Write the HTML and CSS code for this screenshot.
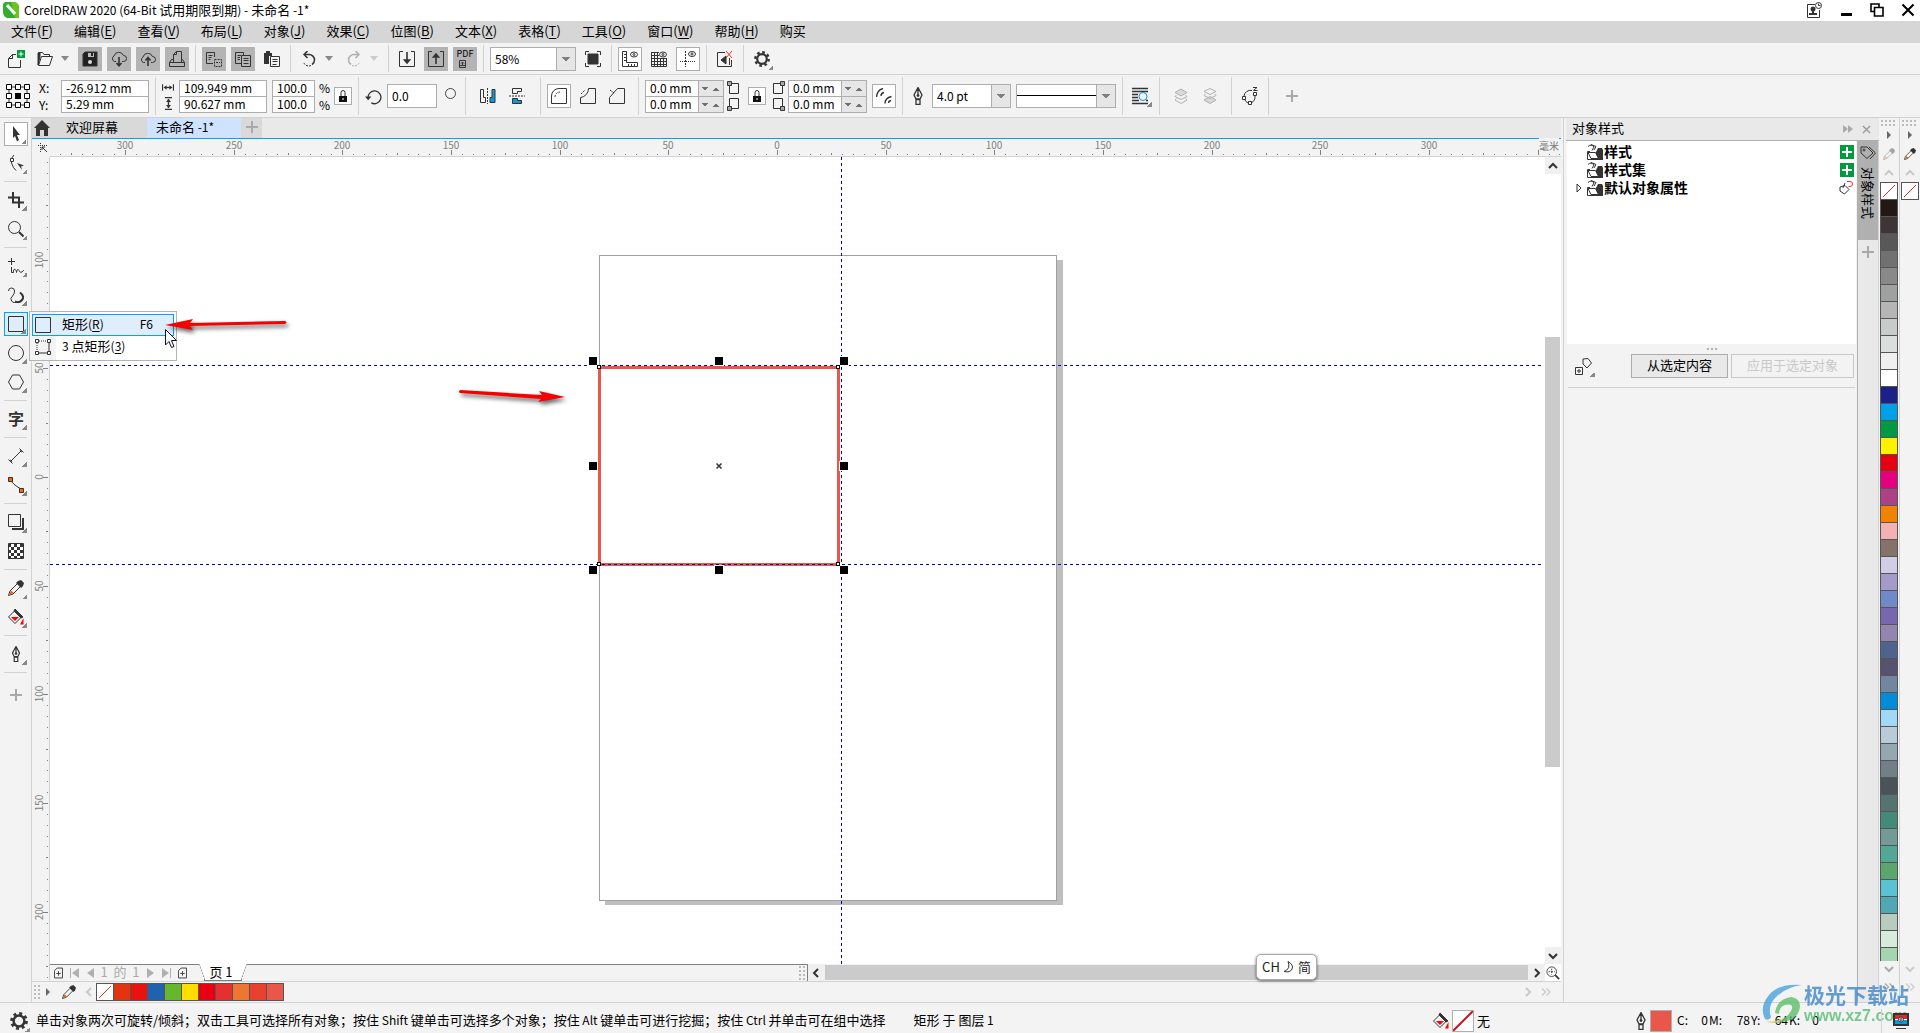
FILE: index.html
```html
<!DOCTYPE html>
<html lang="zh-CN">
<head>
<meta charset="utf-8">
<title>CorelDRAW 2020 (64-Bit 试用期限到期) - 未命名 -1*</title>
<link rel="stylesheet" href="styles.css">
</head>
<body>
<svg class="defs" aria-hidden="true">
  <symbol id="new" viewBox="0 0 18 18"><path d="M9 4.500H5.500L1.500 8.500V17.500H13.500V10M5.500 4.500V8.500H1.500" /><path d="M10 0H18V8H10z" fill="#009b3e" stroke="none"/><path d="M14 1.500V6.500M11.500 4H16.500" stroke="#fff"/></symbol>
  <symbol id="open" viewBox="0 0 16 16"><path d="M1.500 14V1.500H5.500L7 3.500H12.500V5M1.500 14.500 4.500 5.500H15.500L12.500 14.500z"/><path d="M1 2 3 2 3 6 1 14z" fill="#333"/></symbol>
  <symbol id="save" viewBox="0 0 16 16"><path d="M3 1H15V15H1V3z" fill="#222"/><path d="M6 2H12V6H6z" fill="#bbb" stroke="none"/><path d="M9 2H11V5H9z" fill="#222" stroke="none"/><circle cx="8" cy="11" r="2" fill="#ddd" stroke="none"/></symbol>
  <symbol id="clouddn" viewBox="0 0 16 16"><path d="M5 10.500H3.500A3 3 0 0 1 3 5 5 5 0 0 1 12.500 4.500 3 3 0 0 1 12.500 10.500H11"/><path d="M8 6V14M5.500 12 8 14.800 10.500 12" stroke-width="1.600"/></symbol>
  <symbol id="cloudup" viewBox="0 0 16 16"><path d="M5 11.500H3.500A3 3 0 0 1 3 6 5 5 0 0 1 12.500 5.500 3 3 0 0 1 12.500 11.500H11"/><path d="M8 15V7M5.500 9.500 8 6.500 10.500 9.500" stroke-width="1.600"/></symbol>
  <symbol id="print" viewBox="0 0 16 16"><path d="M4.500 11V3.500L7.500 .500H12.500V11M7.500 .500V3.500H4.500M4.500 8.500H2.500L.500 11.500V15.500H15.500V11.500L13.500 8.500H12.500M.500 11.500H15.500"/></symbol>
  <symbol id="cut" viewBox="0 0 16 16"><path d="M7 12.500H.500V1.500H8.500V6M2.500 4.500H6.500M2.500 6.500H5.500M2.500 8.500H4.500"/><path d="M8.500 8.500H15.500V15.500H8.500zM10 11.500H14" stroke-dasharray="2 1"/></symbol>
  <symbol id="copy" viewBox="0 0 16 16"><path d="M6 12.500H.500V1.500H8.500V4M2.500 4.500H6M2.500 6.500H5M2.500 8.500H5M6.500 4.500H15.500V15.500H6.500zM8.500 7.500H13.500M8.500 9.500H13.500M8.500 12.500H13.500"/></symbol>
  <symbol id="paste" viewBox="0 0 16 16"><path d="M0 2H2V0H6V2H8V5H5V13H0z" fill="#333" stroke="none"/><path d="M6.500 5.500H15.500V15.500H6.500zM8.500 8.500H13.500M8.500 10.500H13.500M8.500 13.500H12.500"/></symbol>
  <symbol id="undo" viewBox="0 0 16 16"><path d="M4 3.500H8A5.500 5.500 0 0 1 13.500 9 5.500 5.500 0 0 1 11 13.500" stroke-width="1.500"/><path d="M10 14.500A5.500 5.500 0 0 1 2.500 11" stroke-dasharray="2 1"/><path d="M6.500 0 3 3.500 6.500 7" stroke-width="1.500"/></symbol>
  <symbol id="import" viewBox="0 0 16 16"><path d="M4 .500H.500V15.500H15.500V.500H12"/><path d="M8 1V12M5.500 9 8 12 10.500 9z" stroke-width="1.600" fill="#333"/></symbol>
  <symbol id="export" viewBox="0 0 16 16"><path d="M4 .500H.500V15.500H15.500V.500H12"/><path d="M8 13V3M5.500 6 8 3 10.500 6z" stroke-width="1.600" fill="#333"/></symbol>
  <symbol id="pdf" viewBox="0 0 18 18"><path d="M3.500 10.500H9.500V17.500H3.500zM3.500 15.500H9.500M6.500 15V12M5 13.500 6.500 12 8 13.500"/></symbol>
  <symbol id="full" viewBox="0 0 16 16"><path d="M3 3H13V13H3z" fill="#333"/><path d="M.500 4V.500H4M12 .500H15.500V4M15.500 12V15.500H12M4 15.500H.500V12"/></symbol>
  <symbol id="rulers" viewBox="0 0 16 16"><path d="M.500 .500H4.500V11.500H15.500V15.500H.500zM2 3.500H4M2 6.500H4M2 9.500H4M6.500 13V15M9.500 13V15M12.500 13V15"/><ellipse cx="12" cy="3.500" rx="3.500" ry="2.500"/><circle cx="12" cy="3.500" r="1"/></symbol>
  <symbol id="grid" viewBox="0 0 16 16"><path d="M.500 1V15.500H15.500V7M3.500 1V15M6.500 1V15M9.500 7V15M12.500 7V15M.500 1.500H8M.500 4.500H8M.500 7.500H15M.500 10.500H15M.500 13.500H15"/><ellipse cx="12" cy="3.500" rx="3.500" ry="2.500"/><circle cx="12" cy="3.500" r="1"/></symbol>
  <symbol id="guides" viewBox="0 0 16 16"><path d="M5.500 0V16" stroke-dasharray="2 1"/><path d="M0 10.500H16" stroke-dasharray="1 1"/><ellipse cx="12" cy="3" rx="3.500" ry="2.500"/><circle cx="12" cy="3" r="1"/></symbol>
  <symbol id="snap" viewBox="0 0 16 16"><path d="M8 1.500H.500V15.500H14.500V9"/><path d="M4 9 9 5V13z" fill="#333"/><path d="M12.500 7V14"/><path d="M9 0 15 7M15 0 9 7" stroke="#e33"/></symbol>
  <symbol id="gear" viewBox="0 0 16 16"><circle cx="8" cy="8" r="4.800" stroke-width="2.200"/><circle cx="8" cy="8" r="6.700" stroke-width="2.400" stroke-dasharray="2.630 2.630"/></symbol>
  <symbol id="origin" viewBox="0 0 24 24"><path d="M3 3H21V21H3z"/><path d="M.500 .500H5.500V5.500H.500zM9.500 .500H14.500V5.500H9.500zM18.500 .500H23.500V5.500H18.500zM.500 9.500H5.500V14.500H.500zM18.500 9.500H23.500V14.500H18.500zM.500 18.500H5.500V23.500H.500zM9.500 18.500H14.500V23.500H9.500zM18.500 18.500H23.500V23.500H18.500z" fill="#fff" stroke="#000"/><path d="M9 9H15V15H9z" fill="#000" stroke="none"/></symbol>
  <symbol id="wd" viewBox="0 0 13 9"><path d="M.500 1V8M12.500 1V8" stroke-width="1.400"/><path d="M2 4.500H11" stroke-width="1.400"/><path d="M5 2 2 4.500 5 7zM8 2 11 4.500 8 7z" fill="#333" stroke="none"/></symbol>
  <symbol id="ht" viewBox="0 0 9 13"><path d="M1 .500H8M1 12.500H8" stroke-width="1.400"/><path d="M4.500 2V11" stroke-width="1.400"/><path d="M2 5 4.500 2 7 5zM2 8 4.500 11 7 8z" fill="#333" stroke="none"/></symbol>
  <symbol id="lock" viewBox="0 0 12 14"><path d="M4 7V3.500A2 2 0 0 1 8 3.500V7"/><path d="M2 7H10V13H2z" fill="#111" stroke="none"/><path d="M6 9V11" stroke="#fff"/></symbol>
  <symbol id="rotate" viewBox="0 0 16 16"><path d="M3 9.500A6 6 0 1 1 6 14" stroke-width="1.200"/><path d="M0 8H6L3 11.500z" fill="#333" stroke="none"/></symbol>
  <symbol id="mirh" viewBox="0 0 16 16"><path d="M.500 1.500H3.500V9.500H5.500V14.500H.500z"/><path d="M7.500 0V16" stroke-dasharray="2 1"/><path d="M10 9.500H12V1.500H15V14.500H10z" fill="#1296db"/></symbol>
  <symbol id="mirv" viewBox="0 0 16 16"><path d="M3.500 5.500V.500H12.500V3.500H8.500V5.500z"/><path d="M0 8H16" stroke-dasharray="2 1"/><path d="M3.500 10.500H8.500V12.500H12.500V15.500H3.500z" fill="#1296db"/></symbol>
  <symbol id="cround" viewBox="0 0 16 16"><path d="M.500 8A7.500 7.500 0 0 1 8 .500H15.500V15.500H.500z"/><path d="M4 9A5 5 0 0 1 9 4" stroke-dasharray="2 1"/></symbol>
  <symbol id="cscal" viewBox="0 0 16 16"><path d="M8.500 .500H15.500V15.500H.500V9.500A9 9 0 0 0 8.500 .500z"/><path d="M1 6 5 2" stroke-dasharray="2 1"/></symbol>
  <symbol id="ccham" viewBox="0 0 16 16"><path d="M8.500 .500H15.500V15.500H.500V9.500z"/><path d="M1 2 5 5" stroke-dasharray="2 1"/></symbol>
  <symbol id="ctl" viewBox="0 0 13 14"><path d="M2.500 2.500H11.500V12.500H2.500z"/><path d="M.500 .500H4.500V4.500H.500z" fill="#aaa"/></symbol>
  <symbol id="cbl" viewBox="0 0 13 14"><path d="M2.500 1.500H11.500V11.500H2.500z"/><path d="M.500 9.500H4.500V13.500H.500z" fill="#aaa"/></symbol>
  <symbol id="ctr" viewBox="0 0 13 14"><path d="M1.500 2.500H10.500V12.500H1.500z"/><path d="M8.500 .500H12.500V4.500H8.500z" fill="#aaa"/></symbol>
  <symbol id="cbr" viewBox="0 0 13 14"><path d="M1.500 1.500H10.500V11.500H1.500z"/><path d="M8.500 9.500H12.500V13.500H8.500z" fill="#aaa"/></symbol>
  <symbol id="rel" viewBox="0 0 16 16"><path d="M.500 9Q1 2 7 .500M5 8Q5 5 8 4.500M9 15.500Q9 10 15.500 8.500M12.500 15Q12.500 13 15 12.500" stroke-width="1.300"/></symbol>
  <symbol id="pen" viewBox="0 0 12 18"><path d="M6 .500 2 8 4 12H8L10 8zM6 2V8M4 12.500H8V17.500H4z" stroke-width="1.300"/><circle cx="6" cy="8.500" r="1" fill="#333"/></symbol>
  <symbol id="wrap" viewBox="0 0 18 18"><path d="M0 1.500H16M0 4.500H16M0 7.500H6M0 10.500H6M0 13.500H7M0 16.500H16M14 13.500H16" stroke-width="1.300"/><circle cx="11" cy="9.500" r="4" stroke="#1296db"/></symbol>
  <symbol id="front" viewBox="0 0 16 16"><path d="M8 1 14 4.500 8 8 2 4.500z" fill="#aaa"/><path d="M3.500 7 2 8.500 8 11.500 14 8.500 12.500 7M3.500 10.500 2 12 8 15.500 14 12 12.500 10.500"/></symbol>
  <symbol id="back" viewBox="0 0 16 16"><path d="M8 8.500 14 12 8 15.500 2 12z" fill="#aaa"/><path d="M8 .500 14 3.500 8 6.500 2 3.500zM3.500 6 2 7.500 8 10.500 14 7.500 12.500 6"/></symbol>
  <symbol id="curve" viewBox="0 0 18 18"><path d="M11 3.500A6.500 6.500 0 0 0 3 9M4 13A6.500 6.500 0 0 0 7 16M10 16A7 7 0 0 0 14 9"/><path d="M1.500 9.500H4.500V12.500H1.500zM12.500 5.500H15.500V8.500H12.500zM7.500 14.500H10.500V17.500H7.500z" fill="#fff"/><path d="M12 .500H16L12.500 3.500H16.500"/></symbol>
  <symbol id="plus" viewBox="0 0 12 12"><path d="M6 0V12M0 6H12" stroke="#aaa" stroke-width="2"/></symbol>
  <symbol id="home" viewBox="0 0 16 16"><path d="M8 0 16 8H14V16H10V10H6V16H2V8H0z" fill="#333" stroke="none"/></symbol>
  <symbol id="pick" viewBox="0 0 16 16"><path d="M5 0 12 9H9L11 14 9 15.500 7 10 5 12z" fill="#333" stroke="none"/></symbol>
  <symbol id="shape" viewBox="0 0 16 16"><path d="M6 0Q2 3 3.500 8T8 15.500"/><path d="M2.500 3.500H5.500V6.500H2.500z" fill="#fff"/><path d="M9 8 16 10.500 13 11.500 14 15z" fill="#333" stroke="none"/></symbol>
  <symbol id="crop" viewBox="0 0 16 16"><path d="M5 0V10.500H16M0 5.500H11V16M5 5.500H11" stroke-width="2"/></symbol>
  <symbol id="zoom" viewBox="0 0 16 16"><circle cx="6.500" cy="6.500" r="6"/><path d="M11 11 15.500 15.500" stroke-width="2"/></symbol>
  <symbol id="free" viewBox="0 0 16 16"><path d="M3.500 0V7M0 3.500H7M3.500 9V14.500H5.500Q5 10.500 7 11.500T8.500 14.500Q9.500 9.500 11 12.500T14 14 16 12"/></symbol>
  <symbol id="art" viewBox="0 0 16 16"><path d="M.500 4A3 3 0 0 1 6.500 4Q7 6 4.500 9A3.500 3.500 0 0 0 9 15"/><path d="M7 14.500Q11 16.500 14 13T12 5.500" stroke-width="2"/></symbol>
  <symbol id="rect" viewBox="0 0 16 16"><path d="M.500 .500H15.500V15.500H.500z"/></symbol>
  <symbol id="rect3" viewBox="0 0 16 16"><path d="M2 2H14" stroke-dasharray="1 1"/><path d="M2 2V14" stroke-dasharray="1 1"/><path d="M14 2V14H2"/><path d="M.500 .500H3.500V3.500H.500zM12.500 .500H15.500V3.500H12.500zM.500 12.500H3.500V15.500H.500zM12.500 12.500H15.500V15.500H12.500z" fill="#fff"/></symbol>
  <symbol id="ellipse" viewBox="0 0 16 16"><circle cx="8" cy="8" r="7.500"/></symbol>
  <symbol id="poly" viewBox="0 0 16 16"><path d="M4.500 1H11.500L15.500 8 11.500 15H4.500L.500 8z"/></symbol>
  <symbol id="dim" viewBox="0 0 16 16"><path d="M2 14 14 2M.500 11.500 4.500 15.500M11.500 .500 15.500 4.500"/><path d="M2 14 2.500 11.500 4.500 13.500zM14 2 11.500 2.500 13.500 4.500z" fill="#333" stroke="none"/></symbol>
  <symbol id="conn" viewBox="0 0 16 16"><path d="M3 3Q4 7 13 12"/><path d="M.500 .500H4.500V4.500H.500zM11.500 11.500H15.500V15.500H11.500z" fill="#f60"/></symbol>
  <symbol id="shadow" viewBox="0 0 16 16"><path d="M.500 .500H12.500V12.500H.500z"/><path d="M15 4V15H4" stroke-width="2"/></symbol>
  <symbol id="check" viewBox="0 0 16 16"><path d="M.500 .500H15.500V15.500H.500z" fill="#fff"/><path d="M0 2.500H16M0 8.500H16M0 14.500H16" stroke-width="3" stroke-dasharray="3 3"/><path d="M3 5.500H16M3 11.500H16" stroke-width="3" stroke-dasharray="3 3"/></symbol>
  <symbol id="dropper" viewBox="0 0 16 16"><path d="M10 1 13 0 16 3 15 6 13 8 8 3z" fill="#333" stroke="none"/><path d="M9 4 2 11 .500 15.500 5 14 12 7"/><path d="M3 10.500 6 13 1 15.500z" fill="#e06a1b" stroke="none"/></symbol>
  <symbol id="bucket" viewBox="0 0 16 16"><path d="M7 1.500 13.500 8 7 14.500 .500 8z"/><path d="M7 0 15 8 13 9 6 2z" fill="#333"/><path d="M3 8H11L7 12z" fill="red" stroke="none"/><path d="M15.500 9V15.500H12Z" fill="red" stroke="none"/></symbol>
  <symbol id="account" viewBox="0 0 16 16"><path d="M9 2.500H1.500V15.500H13.500V8"/><circle cx="7" cy="7" r="2.500" fill="#333" stroke="none"/><path d="M3 13V11H6V9H8V11H11V13z" fill="#333" stroke="none"/><circle cx="12.500" cy="3.500" r="3"/><path d="M12.500 1.500V3.500H14.500"/></symbol>
  <symbol id="min" viewBox="0 0 14 14"><path d="M2 11.500H13" stroke="#000" stroke-width="3"/></symbol>
  <symbol id="restore" viewBox="0 0 14 14"><path d="M4 8.500H1V1H9V4M4.500 4.500H13V13H4.500z" stroke="#000" stroke-width="1.600"/></symbol>
  <symbol id="close" viewBox="0 0 14 14"><path d="M1.500 1.500 12.500 12.500M12.500 1.500 1.500 12.500" stroke="#000" stroke-width="2"/></symbol>
  <symbol id="folder" viewBox="0 0 16 16"><path d="M3 7.500H.500V15.500H15"/><path d="M9 8 11 4H15L16 6V16H9z" fill="#333" stroke="none"/><path d="M1 8.500H8.500L11.500 14.500H4z" fill="#fff"/><path d="M1 2.500Q4-.500 7 3L5 6.500M4 .500 9 2.500 7 6"/></symbol>
  <symbol id="tag" viewBox="0 0 16 16"><path d="M1 2 7 2 13 8 7 13.500 1 8z"/><path d="M9 2 15.500 8 10 14"/><circle cx="4" cy="5" r="1"/></symbol>
  <symbol id="tagred" viewBox="0 0 16 16"><path d="M2 7 7 5.500 11 9.500 6.500 14 2 11zM5 8 7 3"/><path d="M9 1.500H12A2.500 2.500 0 0 1 12 6.500H10.500" stroke="#e33"/></symbol>
  <symbol id="tagadd" viewBox="0 0 18 18"><path d="M8 2 13 1.500 16.500 6 12 11 8 7zM.500 10.500H7.500V17.500H.500zM4 12V16M2 14H6"/></symbol>
  <symbol id="addpg" viewBox="0 0 10 12"><path d="M3.500 .500H9.500V11.500H.500V3.500zM5 4V9M2.500 6.500H7.500"/></symbol>
  <symbol id="zoompg" viewBox="0 0 16 16"><circle cx="6.500" cy="6.500" r="5.500"/><path d="M10.500 10.500 15 15" stroke-width="2"/><path d="M6.500 3V10M3 6.500H10" stroke-dasharray="2 1"/></symbol>
  <symbol id="chev" viewBox="0 0 10 10"><path d="M3 1 7 5 3 9" stroke-width="2"/></symbol>
  <symbol id="chev2" viewBox="0 0 10 10"><path d="M1 1.500 4.500 5 1 8.500M5.500 1.500 9 5 5.500 8.500" stroke-width="1.300"/></symbol>
  <symbol id="monitor" viewBox="0 0 16 16"><path d="M1 1H15V12H1z" fill="#fff" stroke-width="2"/><path d="M2 2H14V6H2z" fill="#e8262a" stroke="none"/><path d="M2 7H14V11H2z" fill="#00a0e9" stroke="none"/><circle cx="8" cy="6.500" r="2.500" fill="#fff"/><circle cx="8" cy="6.500" r="1"/><path d="M3 15.500H13"/></symbol>
  <symbol id="ruleorg" viewBox="0 0 10 10"><path d="M0 2.500H10M2.500 0V10" stroke-dasharray="1 1"/><path d="M4 4 9 9M4 7V4H7"/></symbol>
</svg>

<header class="titlebar">
  <svg class="logo" viewBox="0 0 16 18"><path d="M2 1H12Q16 3 16 6V17H4Q0 15 0 11V3z" fill="#2fae32"/><path d="M8 1H12Q16 3 16 6V17H12z" fill="#6cc51f"/><path d="M4 4 12 13" stroke="#fff" stroke-width="3"/></svg>
  <h1><span class="lat">CorelDRAW 2020 (64-Bit</span> 试用期限到期<span class="lat">) -</span> 未命名<span class="lat"> -1*</span></h1>
  <div class="winbtns">
    <button aria-label="账户"><svg class="ic"><use href="#account"/></svg></button>
    <button aria-label="最小化"><svg class="ic i14"><use href="#min"/></svg></button>
    <button aria-label="还原"><svg class="ic i14"><use href="#restore"/></svg></button>
    <button aria-label="关闭"><svg class="ic i14"><use href="#close"/></svg></button>
  </div>
</header>

<nav class="menubar">
  <button>文件(<u>F</u>)</button><button>编辑(<u>E</u>)</button><button>查看(<u>V</u>)</button><button>布局(<u>L</u>)</button><button>对象(<u>J</u>)</button><button>效果(<u>C</u>)</button><button>位图(<u>B</u>)</button><button>文本(<u>X</u>)</button><button>表格(<u>T</u>)</button><button>工具(<u>O</u>)</button><button>窗口(<u>W</u>)</button><button>帮助(<u>H</u>)</button><button>购买</button>
</nav>

<div class="bar standard">
  <button class="tool" aria-label="新建"><svg class="ic i18"><use href="#new"/></svg></button>
  <div class="split"><button class="tool" aria-label="打开"><svg class="ic"><use href="#open"/></svg></button><button class="drop" aria-label="最近文件"></button></div>
  <button class="tool dark" aria-label="保存"><svg class="ic"><use href="#save"/></svg></button>
  <button class="tool dark" aria-label="从云端打开"><svg class="ic"><use href="#clouddn"/></svg></button>
  <button class="tool dark" aria-label="保存到云端"><svg class="ic"><use href="#cloudup"/></svg></button>
  <button class="tool dark" aria-label="打印"><svg class="ic"><use href="#print"/></svg></button>
  <i class="sep"></i>
  <button class="tool dark" aria-label="剪切"><svg class="ic"><use href="#cut"/></svg></button>
  <button class="tool dark" aria-label="复制"><svg class="ic"><use href="#copy"/></svg></button>
  <button class="tool" aria-label="粘贴"><svg class="ic"><use href="#paste"/></svg></button>
  <i class="sep"></i>
  <div class="split"><button class="tool" aria-label="撤消"><svg class="ic"><use href="#undo"/></svg></button><button class="drop" aria-label="撤消列表"></button></div>
  <div class="split off"><button class="tool" aria-label="重做" disabled><svg class="ic flip"><use href="#undo"/></svg></button><button class="drop" aria-label="重做列表" disabled></button></div>
  <i class="sep"></i>
  <button class="tool" aria-label="导入"><svg class="ic"><use href="#import"/></svg></button>
  <button class="tool dark" aria-label="导出"><svg class="ic"><use href="#export"/></svg></button>
  <button class="tool dark pdf"><span>PDF</span><svg class="ic i18"><use href="#pdf"/></svg></button>
  <i class="sep"></i>
  <div class="combo zoomlevel"><select aria-label="缩放级别"><option>58%</option></select></div>
  <button class="tool" aria-label="全屏预览"><svg class="ic"><use href="#full"/></svg></button>
  <i class="sep"></i>
  <button class="tool on" aria-label="显示标尺"><svg class="ic"><use href="#rulers"/></svg></button>
  <button class="tool" aria-label="显示网格"><svg class="ic"><use href="#grid"/></svg></button>
  <button class="tool on" aria-label="显示辅助线"><svg class="ic"><use href="#guides"/></svg></button>
  <i class="sep"></i>
  <button class="tool" aria-label="关闭贴齐"><svg class="ic"><use href="#snap"/></svg></button>
  <i class="sep"></i>
  <button class="tool more" aria-label="选项"><svg class="ic"><use href="#gear"/></svg></button>
</div>

<div class="bar property">
  <svg class="ic i24"><use href="#origin"/></svg>
  <div class="pair labels"><label for="px">X:</label><label for="py">Y:</label></div>
  <div class="pair box w88"><input id="px" value="-26.912 mm"><input id="py" value="5.29 mm"></div>
  <i class="sep"></i>
  <div class="pair dims"><svg class="ic wd"><use href="#wd"/></svg><svg class="ic ht"><use href="#ht"/></svg></div>
  <div class="pair box w88"><input aria-label="宽度" value="109.949 mm"><input aria-label="高度" value="90.627 mm"></div>
  <div class="pair box w43"><input aria-label="水平缩放" value="100.0"><input aria-label="垂直缩放" value="100.0"></div>
  <div class="pair pct"><span>%</span><span>%</span></div>
  <button class="lock" aria-label="锁定比率"><svg class="ic lk"><use href="#lock"/></svg></button>
  <i class="sep"></i>
  <svg class="ic rot"><use href="#rotate"/></svg>
  <input class="single" aria-label="旋转角度" value="0.0">
  <span class="degree"></span>
  <i class="sep"></i>
  <div class="group mirror">
    <button class="tool" aria-label="水平镜像"><svg class="ic"><use href="#mirh"/></svg></button>
    <button class="tool" aria-label="垂直镜像"><svg class="ic"><use href="#mirv"/></svg></button>
  </div>
  <i class="sep"></i>
  <div class="group corners">
    <button class="tool on" aria-label="圆角"><svg class="ic"><use href="#cround"/></svg></button>
    <button class="tool" aria-label="扇形角"><svg class="ic"><use href="#cscal"/></svg></button>
    <button class="tool" aria-label="倒棱角"><svg class="ic"><use href="#ccham"/></svg></button>
  </div>
  <i class="sep"></i>
  <div class="group radii">
    <div class="pair box spin"><input aria-label="左上角半径" value="0.0 mm"><input aria-label="左下角半径" value="0.0 mm"></div>
    <div class="pair cicons"><svg class="ic cn"><use href="#ctl"/></svg><svg class="ic cn"><use href="#cbl"/></svg></div>
    <button class="lock" aria-label="同时编辑所有角"><svg class="ic lk"><use href="#lock"/></svg></button>
    <div class="pair cicons"><svg class="ic cn"><use href="#ctr"/></svg><svg class="ic cn"><use href="#cbr"/></svg></div>
    <div class="pair box spin"><input aria-label="右上角半径" value="0.0 mm"><input aria-label="右下角半径" value="0.0 mm"></div>
  </div>
  <button class="tool on" aria-label="相对角缩放"><svg class="ic"><use href="#rel"/></svg></button>
  <i class="sep"></i>
  <svg class="ic i18"><use href="#pen"/></svg>
  <div class="combo outline"><select aria-label="轮廓宽度"><option>4.0 pt</option></select></div>
  <div class="combo linestyle"><select aria-label="线条样式"><option></option></select></div>
  <i class="sep"></i>
  <button class="tool more" aria-label="文本换行"><svg class="ic i18"><use href="#wrap"/></svg></button>
  <i class="sep"></i>
  <div class="group order">
    <button class="tool" aria-label="到图层前面" disabled><svg class="ic"><use href="#front"/></svg></button>
    <button class="tool" aria-label="到图层后面" disabled><svg class="ic"><use href="#back"/></svg></button>
  </div>
  <i class="sep"></i>
  <button class="tool" aria-label="转换为曲线"><svg class="ic i18"><use href="#curve"/></svg></button>
  <i class="sep"></i>
  <button class="tool addbtn" aria-label="快速自定义"><svg class="ic i12"><use href="#plus"/></svg></button>
</div>

<main>
  <aside class="toolbox">
    <button class="tool on more" aria-label="选择"><svg class="ic"><use href="#pick"/></svg></button>
    <button class="tool more" aria-label="形状"><svg class="ic"><use href="#shape"/></svg></button>
    <i class="hsep"></i>
    <button class="tool more" aria-label="裁剪"><svg class="ic"><use href="#crop"/></svg></button>
    <button class="tool more" aria-label="缩放"><svg class="ic"><use href="#zoom"/></svg></button>
    <i class="hsep"></i>
    <button class="tool more" aria-label="手绘"><svg class="ic"><use href="#free"/></svg></button>
    <button class="tool more" aria-label="艺术笔"><svg class="ic"><use href="#art"/></svg></button>
    <div class="flyhost">
      <button class="tool more active" aria-label="矩形"><svg class="ic"><use href="#rect"/></svg></button>
      <div class="flyout">
        <button class="current"><svg class="ic"><use href="#rect"/></svg><span>矩形<span class="lat">(<u>R</u>)</span></span><kbd>F6</kbd></button>
        <button><svg class="ic"><use href="#rect3"/></svg><span><span class="lat">3</span> 点矩形<span class="lat">(<u>3</u>)</span></span></button>
      </div>
    </div>
    <button class="tool more" aria-label="椭圆形"><svg class="ic"><use href="#ellipse"/></svg></button>
    <button class="tool more" aria-label="多边形"><svg class="ic"><use href="#poly"/></svg></button>
    <i class="hsep"></i>
    <button class="tool more textool">字</button>
    <i class="hsep"></i>
    <button class="tool more" aria-label="平行度量"><svg class="ic"><use href="#dim"/></svg></button>
    <button class="tool more" aria-label="连接器"><svg class="ic"><use href="#conn"/></svg></button>
    <i class="hsep"></i>
    <button class="tool more" aria-label="阴影"><svg class="ic"><use href="#shadow"/></svg></button>
    <button class="tool" aria-label="透明度"><svg class="ic"><use href="#check"/></svg></button>
    <i class="hsep"></i>
    <button class="tool more" aria-label="颜色滴管"><svg class="ic"><use href="#dropper"/></svg></button>
    <button class="tool more" aria-label="交互式填充"><svg class="ic"><use href="#bucket"/></svg></button>
    <i class="hsep"></i>
    <button class="tool more" aria-label="轮廓笔"><svg class="ic"><use href="#pen"/></svg></button>
    <i class="hsep"></i>
    <button class="tool addtool" aria-label="快速自定义"><svg class="ic i12"><use href="#plus"/></svg></button>
  </aside>

  <section class="document">
    <div class="doctabs">
      <button class="welcome"><svg class="ic"><use href="#home"/></svg><span>欢迎屏幕</span></button>
      <button class="current">未命名<span class="lat">&nbsp;-1*</span></button>
      <button class="newtab" aria-label="新建文档"><svg class="ic i12"><use href="#plus"/></svg></button>
    </div>
    <div class="view">
      <div class="corner"><svg class="ic i10"><use href="#ruleorg"/></svg></div>
      <div class="hruler"><svg id="hruler"></svg><span>毫米</span></div>
      <div class="vruler"><svg id="vruler"></svg></div>
      <div class="canvas">
        <svg shape-rendering="crispEdges">
          <rect x="555" y="103" width="458" height="645" fill="#bfbfbf"/>
          <rect x="549.5" y="98.5" width="457" height="645" fill="#fff" stroke="#a0a0a0"/>
          <rect x="549.5" y="210.500" width="239" height="197" fill="none" stroke="#e9574a" stroke-width="3"/>
          <g class="guide"><line x1="0" y1="208.500" x2="1492" y2="208.500"/><line x1="0" y1="407.500" x2="1492" y2="407.500"/><line x1="791.500" y1="0" x2="791.500" y2="100%"/></g>
          <g fill="#000" stroke="#fff" stroke-width="2" paint-order="stroke">
            <rect x="539" y="200" width="8" height="8"/><rect x="665" y="200" width="8" height="8"/><rect x="790" y="200" width="8" height="8"/>
            <rect x="539" y="305" width="8" height="8"/><rect x="790" y="305" width="8" height="8"/>
            <rect x="539" y="409" width="8" height="8"/><rect x="665" y="409" width="8" height="8"/><rect x="790" y="409" width="8" height="8"/>
          </g>
          <g fill="#fff" stroke="#000">
            <rect x="547.500" y="208.500" width="3" height="3"/><rect x="786.500" y="208.500" width="3" height="3"/><rect x="547.500" y="405.500" width="3" height="3"/><rect x="786.500" y="405.500" width="3" height="3"/>
          </g>
          <path d="M666.500 306.500 671.500 311.500M671.500 306.500 666.500 311.500" stroke="#333" stroke-width="1.500" shape-rendering="auto"/>
        </svg>
      </div>
      <div class="vscroll"><button aria-label="向上滚动"><svg class="ic i10 up"><use href="#chev"/></svg></button><div class="track"><div class="thumb"></div></div><button aria-label="向下滚动"><svg class="ic i10 down"><use href="#chev"/></svg></button></div>
      <div class="bottomrow">
        <div class="pagenav">
          <button aria-label="在前面添加页"><svg class="ic pg"><use href="#addpg"/></svg></button>
          <button disabled aria-label="首页"><i class="barl"></i><i class="tl"></i></button>
          <button disabled aria-label="上一页"><i class="tl"></i></button>
          <span>1&nbsp; 的&nbsp; 1</span>
          <button disabled aria-label="下一页"><i class="tr"></i></button>
          <button disabled aria-label="末页"><i class="tr"></i><i class="barl"></i></button>
          <button aria-label="在后面添加页"><svg class="ic pg"><use href="#addpg"/></svg></button>
        </div>
        <button class="pagetab">页 1</button>
        <div class="navfill"><i class="grip"></i></div>
        <div class="hscroll"><button aria-label="向左滚动"><svg class="ic i10 left"><use href="#chev"/></svg></button><div class="thumb"></div><button aria-label="向右滚动"><svg class="ic i10"><use href="#chev"/></svg></button></div>
      </div>
      <button class="navzoom" aria-label="导航器"><svg class="ic i14"><use href="#zoompg"/></svg></button>
    </div>
    <div class="docpalette">
      <i class="grip"></i>
      <button class="pa" aria-label="调色板菜单"><i class="tr small"></i></button>
      <button class="pd" aria-label="颜色滴管"><svg class="ic i14"><use href="#dropper"/></svg></button>
      <button class="pa faint" aria-label="向左"><svg class="ic i10 left"><use href="#chev"/></svg></button>
      <div class="swatches row" data-colors="none e2350f e81310 2062b0 67b72c ffde00 e60012 e53030 ee7630 ea4030 e9574a"></div>
      <div class="endbtns faint"><button aria-label="向右"><svg class="ic i10"><use href="#chev"/></svg></button><button aria-label="展开"><svg class="ic i10"><use href="#chev2"/></svg></button></div>
    </div>
  </section>

  <section class="docker">
    <div class="dockhead"><h2>对象样式</h2><button aria-label="折叠"><i class="tr tiny"></i><i class="tr tiny"></i></button><button aria-label="关闭"><svg class="ic"><use href="#close"/></svg></button></div>
    <div class="dockrow">
      <div class="dockbody">
        <ul class="tree">
          <li><i class="exp"></i><svg class="ic"><use href="#folder"/></svg><span>样式</span><button class="add" aria-label="新建样式"></button></li>
          <li><i class="exp"></i><svg class="ic"><use href="#folder"/></svg><span>样式集</span><button class="add" aria-label="新建样式集"></button></li>
          <li><i class="exp"><svg class="ic ex" viewBox="0 0 6 10"><path d="M1 1 5 5 1 9z"/></svg></i><svg class="ic"><use href="#folder"/></svg><span>默认对象属性</span><button class="reset" aria-label="还原默认"><svg class="ic"><use href="#tagred"/></svg></button></li>
        </ul>
        <div class="dots"><i></i><i></i><i></i></div>
        <div class="dockactions"><button class="tool more" aria-label="新建样式自"><svg class="ic i18"><use href="#tagadd"/></svg></button><button class="act from">从选定内容</button><button class="act apply" disabled>应用于选定对象</button></div>
      </div>
      <div class="docktabs"><button class="vtab"><svg class="ic"><use href="#tag"/></svg><span>对象样式</span></button><button class="tool" aria-label="添加泊坞窗"><svg class="ic i12"><use href="#plus"/></svg></button></div>
    </div>
  </section>

  <div class="palette">
    <i class="grip wide"></i><button class="ph" aria-label="菜单"><i class="tr small"></i></button><button class="ph grey" aria-label="滴管"><svg class="ic i12"><use href="#dropper"/></svg></button><button class="ph faint" aria-label="向上"><svg class="ic i10 up"><use href="#chev"/></svg></button>
    <div class="swatches col" data-colors="none 231815 3e3636 595757 727171 898989 9fa0a0 b5b5b6 c9caca dcdddd efefef ffffff 1d2088 00a0e9 009944 fff100 e60012 e4007f ae4184 f08300 f3b1b3 85736a d0cde6 a59aca 6f8ac6 7667ae 9286b0 4f638f 58516f 7286a1 008cd6 9fd9f6 b7cbd9 95a7b1 707f88 4a525a 537471 438a79 729a98 54a794 5ba56e 5bc2d1 4fa8b4 b8cbbf d6ebd9 a3d5ae"></div>
    <div class="pend"><button aria-label="向下"><svg class="ic i10 down"><use href="#chev"/></svg></button><button aria-label="展开"><svg class="ic i10"><use href="#chev2"/></svg></button></div>
  </div>
  <div class="palette">
    <i class="grip wide"></i><button class="ph" aria-label="菜单"><i class="tr small"></i></button><button class="ph" aria-label="滴管"><svg class="ic i12"><use href="#dropper"/></svg></button><button class="ph faint" aria-label="向上"><svg class="ic i10 up"><use href="#chev"/></svg></button>
    <div class="swatches col" data-colors="none"></div>
    <div class="pend faint"><button aria-label="向下"><svg class="ic i10 down"><use href="#chev"/></svg></button><button aria-label="展开"><svg class="ic i10"><use href="#chev2"/></svg></button></div>
  </div>
</main>

<footer class="status">
  <button class="tool more" aria-label="状态栏设置"><svg class="ic i18"><use href="#gear"/></svg></button>
  <p class="hint">单击对象两次可旋转/倾斜；双击工具可选择所有对象；按住<span class="lat"> Shift </span>键单击可选择多个对象；按住<span class="lat"> Alt </span>键单击可进行挖掘；按住<span class="lat"> Ctrl </span>并单击可在组中选择</p>
  <p class="object">矩形 于 图层<span class="lat"> 1</span></p>
  <div class="fill"><svg class="ic"><use href="#bucket"/></svg><span class="chip"><svg viewBox="0 0 20 20"><path d="M0 20 20 0" stroke="#c8161d" stroke-width="2"/></svg></span><span>无</span></div>
  <div class="stroke"><svg class="ic pn"><use href="#pen"/></svg><span class="chip red"></span>
    <dl><dt>C:</dt><dd>0</dd><dt>M:</dt><dd>78</dd><dt>Y:</dt><dd>64</dd><dt>K:</dt><dd>0</dd></dl></div>
  <button class="proof" aria-label="校样颜色"><svg class="ic"><use href="#monitor"/></svg></button>
</footer>

<svg class="mark" viewBox="0 0 130 30">
  <path d="M4 13 32 7 29 11 124 9Q127 10 124 12L29 14 32 18z" fill="#f60000"/>
</svg>
<svg class="mark lower" viewBox="0 0 110 30">
  <path d="M1 10Q-1 12 1 13L82 19 79 22 106 17 80 11 83 15z" fill="#f60000"/>
</svg>
<svg class="cursor" viewBox="0 0 12 19"><path d="M.500 .500V16L4 12.500 6.500 18.500 9 17.500 6.500 11.500H11.500z" fill="#fff" stroke="#112"/></svg>
<div class="ime"><span>CH</span><svg viewBox="0 0 12 12"><path d="M5 .500Q11 4 9 8T1 10.500Q8 8 5 .500z" fill="none" stroke="#333"/></svg><span>简</span></div>
<div class="watermark">
  <svg viewBox="0 0 42 42"><path d="M41 2Q18 0 8 12T4 36Q8 38 10 34Q6 22 16 13T41 2z" fill="#4aa3df"/><path d="M14 30Q16 16 30 14Q42 16 38 28T10 40Q26 36 30 28T24 22Q18 24 18 31z" fill="#5cbf6a"/><path d="M4 38Q14 40 26 33 14 44 4 38z" fill="#e3d36a"/></svg>
  <div><b>极光下载站</b><span>www.xz7.com</span></div>
</div>
<script src="app.js"></script>
</body>
</html>
```
FILE: styles.css
```css
* { box-sizing: border-box; }
body {
  margin: 0; height: 100vh; display: flex; flex-direction: column; overflow: hidden;
  background: #f3f3f3; color: #000;
  font: 13px/16px "Noto Sans CJK SC", "Noto Sans", sans-serif;
}
button, input, select { font: inherit; color: inherit; margin: 0; padding: 0; border: 0; background: none; border-radius: 0; outline: 0; }
h1, h2, p, ul, dl, dd { margin: 0; padding: 0; font-size: 13px; font-weight: 400; }
.lat { font-size: 12px; white-space: pre; }
.defs { position: absolute; width: 0; height: 0; }

/* icons */
.ic { width: 16px; height: 16px; flex: none; fill: none; stroke: #333; display: block; }
.i10 { width: 10px; height: 10px; }
.i12 { width: 12px; height: 12px; }
.i14 { width: 14px; height: 14px; }
.i18 { width: 18px; height: 18px; }
.i24 { width: 24px; height: 24px; }
.flip { transform: scaleX(-1); }
.up { transform: rotate(-90deg); }
.down { transform: rotate(90deg); }
.left { transform: rotate(180deg); }

/* title and menu */
.titlebar { display: flex; align-items: center; height: 21px; background: #fff; padding: 0 5px 2px 3px; }
.logo { width: 16px; height: 18px; margin-right: 5px; }
.winbtns { margin-left: auto; display: flex; align-items: center; gap: 17px; }
.menubar { display: flex; height: 22px; background: #d6d6d6; padding-left: 1px; }
.menubar button { padding: 0 11px 2px 10px; }
u { text-underline-offset: 2px; }

/* toolbars */
.bar { display: flex; align-items: center; gap: 5px; border-bottom: 1px solid #d2d2d2; font-size: 12px; }
.standard { height: 32px; padding-left: 4px; }
.property { height: 43px; padding-left: 6px; }
.tool { position: relative; width: 24px; height: 24px; flex: none; display: flex; align-items: center; justify-content: center; }
.tool.dark { background: #b4b4b4; }
.tool.on { background: #fff; border: 1px solid #adadad; }
.tool.active { background: #dfedfd; border: 1px solid #00a2ff; }
.more::after { content: ""; position: absolute; right: 1px; bottom: 1px; width: 5px; height: 5px; background: linear-gradient(135deg, transparent 50%, #888 50%); }
.tool:disabled .ic { opacity: .35; }
.pdf { display: grid; place-items: center; }
.pdf > * { grid-area: 1 / 1; }
.pdf span { font: 9px/9px "Noto Sans CJK SC", sans-serif; align-self: start; padding-top: 2px; }
.sep { flex: none; width: 3px; height: 100%; background: linear-gradient(#d2d2d2, #d2d2d2) center / 1px calc(100% - 4px) no-repeat; }
.split { display: flex; }
.drop { width: 16px; height: 24px; display: flex; align-items: center; justify-content: center; }
.drop::after { content: ""; border: 4px solid transparent; border-top: 5px solid #888; border-bottom: 0; }
.off .drop::after { border-top-color: #ccc; }
.combo { position: relative; height: 24px; border: 1px solid #adadad; background: #fff; display: flex; }
.combo select { appearance: none; flex: 1; min-width: 0; padding-left: 4px; text-align: left; }
.combo::after {
  content: ""; position: absolute; right: 0; top: 0; bottom: 0; width: 18px; border-left: 1px solid #adadad; pointer-events: none;
  background:
    linear-gradient(to top right, transparent 50%, #808080 50%) 5px 9px / 4px 5px no-repeat,
    linear-gradient(to top left, transparent 50%, #808080 50%) 9px 9px / 4px 5px no-repeat,
    #e6e6e6;
}
.zoomlevel { width: 86px; }
.outline { width: 79px; }
.linestyle { width: 100px; background: linear-gradient(#000, #000) 0 10px / 100% 1px no-repeat, #fff; }
.pair { display: flex; flex-direction: column; height: 33px; justify-content: space-between; flex: none; }
.pair.box { border: 1px solid #adadad; background: linear-gradient(#adadad, #adadad) 0 15px / 100% 1px no-repeat, #fff; }
.pair.box input { height: 15px; line-height: 15px; width: 100%; padding: 0 0 1px 4px; }
.labels { width: 21px; padding-left: 4px; }
.w88 { width: 88px; }
.w43 { width: 43px; }
.dims { width: 12px; align-items: center; justify-content: center; gap: 5px; }
.wd { width: 12px; height: 9px; }
.ht { width: 9px; height: 13px; }
.pct { width: 9px; align-items: center; }
.lock { width: 18px; height: 18px; flex: none; border: 1px solid #adadad; background: #fff; display: flex; align-items: center; justify-content: center; }
.lk { width: 12px; height: 14px; }
.rot { width: 17px; height: 17px; }
.single { width: 50px; height: 24px; border: 1px solid #adadad; background: #fff; padding: 0 0 2px 4px; }
.degree { width: 17px; height: 17px; display: flex; justify-content: center; }
.degree::after { content: ""; width: 9px; height: 9px; border: 1px solid #444; border-radius: 50%; }
.group { display: flex; align-items: center; gap: 5px; flex: none; }
.mirror { padding: 0 5px 0 4px; }
.corners { padding-right: 3px; }
.order { padding: 0 3px; }
.radii { gap: 3px; }
.radii .lock { margin: 0 3px 0 5px; }
.cicons { width: 13px; height: 30px; }
.cn { width: 13px; height: 14px; }
.spin { position: relative; width: 79px; }
.spin::after {
  content: ""; position: absolute; top: 0; right: 0; bottom: 0; width: 24px; border-left: 1px solid #adadad;
  background:
    linear-gradient(#adadad, #adadad) 0 15px / 100% 1px no-repeat,
    linear-gradient(to top right, transparent 50%, #707070 50%) 3px 6px / 3px 4px no-repeat,
    linear-gradient(to top left, transparent 50%, #707070 50%) 6px 6px / 3px 4px no-repeat,
    linear-gradient(to top right, transparent 50%, #707070 50%) 3px 22px / 3px 4px no-repeat,
    linear-gradient(to top left, transparent 50%, #707070 50%) 6px 22px / 3px 4px no-repeat,
    linear-gradient(to bottom right, transparent 50%, #707070 50%) 14px 6px / 3px 4px no-repeat,
    linear-gradient(to bottom left, transparent 50%, #707070 50%) 17px 6px / 3px 4px no-repeat,
    linear-gradient(to bottom right, transparent 50%, #707070 50%) 14px 22px / 3px 4px no-repeat,
    linear-gradient(to bottom left, transparent 50%, #707070 50%) 17px 22px / 3px 4px no-repeat,
    #e6e6e6;
}
.addbtn { width: 34px; }

/* work area */
main { flex: 1; min-height: 0; display: flex; }
.toolbox { width: 32px; flex: none; border-right: 1px solid #d2d2d2; padding: 4px 0 0 4px; display: flex; flex-direction: column; gap: 5px; }
.hsep { flex: none; width: 23px; height: 3px; background: linear-gradient(#d2d2d2, #d2d2d2) center / 100% 1px no-repeat; }
.textool { font-weight: 700; font-size: 16px; color: #333; padding-bottom: 2px; }
.addtool { margin-top: 4px; }
.flyhost { position: relative; z-index: 5; }
.flyout { position: absolute; left: 25px; top: -1px; width: 148px; background: linear-gradient(#f3f3f3, #f3f3f3) 0 0 / 26px 100% no-repeat, #fff; border: 1px solid #b4b4b4; padding: 2px; }
.flyout button { display: flex; align-items: center; width: 100%; height: 22px; padding: 0 20px 0 2px; border: 1px solid transparent; }
.flyout button > span { margin: 0 auto 0 11px; padding-bottom: 2px; }
.flyout .current { background: #dfedfd; border-color: #00a2ff; }
kbd { font: inherit; font-size: 12px; padding-bottom: 2px; }

.document { flex: 1; min-width: 0; margin-right: 2px; display: flex; flex-direction: column; }
.doctabs { display: flex; height: 21px; background: #e9e9e9; border-bottom: 1px solid #00a2ff; }
.doctabs button { display: flex; align-items: center; background: #d9d9d9; padding-bottom: 2px; }
.doctabs .welcome { width: 115px; padding: 0 0 0 2px; gap: 16px; }
.doctabs .welcome span { padding-bottom: 2px; }
.doctabs .current { width: 94px; padding-left: 9px; background: #cfe3ff; }
.doctabs .newtab { width: 21px; justify-content: center; }
.view { flex: 1; min-height: 0; display: grid; grid-template: 18px 1fr 17px / 18px 1fr 16px; }
.corner { padding: 4px 0 0 6px; }
.hruler { grid-column: 2 / 4; position: relative; border-bottom: 1px solid #d2d2d2; }
.hruler svg, .vruler svg { width: 100%; height: 100%; display: block; overflow: visible; }
.hruler span { position: absolute; right: 2px; top: -1px; font-size: 10px; color: #777; background: #f3f3f3; }
.vruler { grid-row: 2 / 4; grid-column: 1; border-right: 1px solid #d2d2d2; }
.hruler text, .vruler text { font-size: 10px; fill: #808080; text-anchor: middle; }
.canvas { background: #fff; min-width: 0; overflow: hidden; }
.canvas svg { width: 100%; height: 100%; display: block; }
.guide line { stroke: #00c; stroke-width: 1; stroke-dasharray: 3 3; }
.vscroll { display: flex; flex-direction: column; background: #fff; }
.vscroll button, .hscroll button { width: 16px; height: 17px; flex: none; background: #f0f0f0; display: flex; align-items: center; justify-content: center; }
.track { flex: 1; padding-right: 1px; display: flex; flex-direction: column; }
.track::before { content: ""; flex: 163; }
.track::after { content: ""; flex: 180; }
.vscroll .thumb { flex: 430; background: #cbcbcb; }
.bottomrow { grid-column: 2; display: flex; min-width: 0; }
.pagenav { width: 149px; border-top: 1px solid #808080; display: flex; align-items: center; color: #aaa; }
.pagenav button { width: 16px; height: 16px; display: flex; align-items: center; justify-content: center; gap: 1px; }
.pagenav span { width: 44px; text-align: center; padding-bottom: 2px; }
.pg { width: 9px; height: 12px; }
.tl, .tr { border: 5px solid transparent; border-right: 7px solid #b0b0b0; border-left: 0; }
.tr { border-right: 0; border-left: 7px solid #b0b0b0; }
.tr.small { border-width: 4px; border-left: 4px solid #666; border-right: 0; }
.tr.tiny { border-width: 4px; border-left: 5px solid #aaa; border-right: 0; }
.barl { width: 1px; height: 10px; background: #b0b0b0; }
.pagetab { width: 48px; padding: 0 4px 2px 0; clip-path: polygon(0 0, 100% 0, 43px 100%, 5px 100%); background: linear-gradient(to top right, transparent 48%, #808080 50%, transparent 58%) 0 0 / 6px 100% no-repeat, linear-gradient(to top left, transparent 48%, #808080 50%, transparent 58%) 100% 0 / 6px 100% no-repeat, linear-gradient(#808080, #808080) 50% 100% / 38px 1px no-repeat, #fff; }
.navfill { flex: 560; border: solid #808080; border-width: 1px 1px 0 0; display: flex; justify-content: flex-end; align-items: center; padding-right: 2px; }
.hscroll { flex: 740; display: flex; }
.hscroll .thumb { flex: 1; background: #cbcbcb; margin: 1px 0; }
.hscroll button { width: 17px; }
.navzoom { grid-column: 3; background: #fff; display: flex; align-items: center; justify-content: center; }
.grip { width: 6px; height: 14px; background: radial-gradient(circle at 1px 1px, #bbb 1px, transparent 1px) 0 0 / 4px 4px; }
.grip.wide { width: 16px; height: 6px; }
.docpalette { height: 21px; border-top: 1px solid #d2d2d2; display: flex; align-items: center; padding-left: 2px; }
.pa, .pd { width: 16px; height: 16px; display: flex; align-items: center; justify-content: center; }
.pd { width: 26px; }
.pa.faint { width: 14px; }
.faint .ic { stroke: #c8c8c8; }
.swatches { display: flex; }
.swatches button { flex: none; border: 1px solid #555; }
.swatches svg { width: 100%; height: 100%; display: block; stroke: #e5252a; }
.row button { width: 18px; height: 18px; margin-right: -1px; }
.endbtns { margin-left: auto; display: flex; gap: 8px; padding-right: 10px; }

/* docker */
.docker { width: 316px; flex: none; border-left: 1px solid #d2d2d2; padding-left: 2px; display: flex; flex-direction: column; }
.dockhead { height: 23px; background: #e9e9e9; border-bottom: 1px solid #b0b0b0; display: flex; align-items: center; padding: 0 8px 0 6px; gap: 9px; }
.dockhead h2 { flex: 1; padding-bottom: 2px; }
.dockhead button { display: flex; }
.dockhead .ic { width: 9px; height: 9px; opacity: .35; }
.dockrow { flex: 1; min-height: 0; display: flex; }
.dockbody { flex: 1; min-width: 0; }
.tree { height: 203px; margin: 0 1px; background: #fff; list-style: none; padding-top: 2px; font-weight: 700; }
.tree li { display: flex; align-items: center; height: 18px; padding-right: 2px; font-size: 14px; }
.exp { width: 20px; padding-left: 9px; }
.ex { width: 6px; height: 10px; }
.tree span { flex: 1; padding: 0 0 2px 1px; }
.tree .add { width: 14px; height: 14px; background: linear-gradient(#fff, #fff) center / 10px 2px no-repeat, linear-gradient(#fff, #fff) center / 2px 10px no-repeat, #009b3e; }
.dots { display: flex; justify-content: center; gap: 2px; height: 10px; align-items: center; }
.dots i { width: 2px; height: 2px; background: #b0b0b0; }
.dockactions { display: flex; gap: 3px; align-items: center; margin: 0 2px; padding: 0 1px 9px 4px; border-bottom: 1px solid #d2d2d2; }
.act { height: 24px; border: 1px solid #adadad; background: #e9e9e9; padding-bottom: 2px; }
.from { width: 97px; margin-left: auto; }
.apply { width: 123px; color: #c8c8c8; border-color: #c8c8c8; background: #f3f3f3; }
.docktabs { width: 22px; flex: none; background: #e9e9e9; border: solid; border-width: 0 1px; border-color: #d2d2d2 #d2d2d2 #d2d2d2 #b0b0b0; }
.vtab { width: 100%; height: 99px; background: #b0b0b0; display: flex; flex-direction: column; align-items: center; padding-top: 4px; gap: 6px; }
.vtab span { writing-mode: vertical-rl; text-orientation: sideways; line-height: 16px; }
.docktabs .tool { width: 20px; }
.palette { width: 21px; flex: none; border-right: 1px solid #d2d2d2; display: flex; flex-direction: column; align-items: center; min-height: 0; padding-top: 2px; }
.palette:last-child { width: 20px; border: 0; }
.ph { height: 19px; flex: none; display: flex; align-items: center; justify-content: center; }
.palette .grip { margin-bottom: -1px; flex: none; }
.grey .ic { opacity: .4; }
.col { flex: 1; min-height: 0; overflow: hidden; flex-direction: column; }
.col button { width: 18px; height: 18px; margin-bottom: -1px; }
.pend { height: 41px; flex: none; display: flex; flex-direction: column; gap: 8px; padding-top: 3px; }
.pend .ic { stroke: #aaa; }
.pend.faint .ic { stroke: #ccc; }

/* status bar */
.status { height: 31px; flex: none; border-top: 1px solid #d2d2d2; display: flex; align-items: center; padding: 5px 11px 0 7px; white-space: nowrap; }
.hint { padding: 0 0 2px 5px; }
.object { padding: 0 0 2px 28px; flex: 1; }
.fill, .stroke { display: flex; align-items: center; gap: 3px; }
.fill { width: 202px; }
.chip { width: 22px; height: 22px; border: 1px solid #b0b0b0; background: #fff; }
.chip svg { display: block; }
.chip.red { background: #e9574a; }
.pn { width: 12px; height: 18px; }
.stroke { width: 246px; }
dl { display: grid; grid-template-columns: 13px 19px 17px 25px 12px 26px 12px 19px; padding: 0 0 2px 2px; font-size: 12px; }
dd { text-align: right; padding-right: 1px; font-size: 12px; }
.proof { position: relative; z-index: 10; border-left: 1px solid #d2d2d2; padding-left: 11px; height: 24px; }

/* overlays */
.mark { position: absolute; left: 161px; top: 312px; width: 130px; height: 30px; filter: drop-shadow(2px 3px 2px rgba(0, 0, 0, .6)); pointer-events: none; z-index: 8; }
.mark.lower { left: 459px; top: 380px; width: 110px; }
.cursor { position: absolute; left: 165px; top: 329px; width: 12px; height: 19px; z-index: 9; }
.ime { position: absolute; right: 603px; bottom: 53px; width: 61px; height: 26px; background: #fff; border: 1px solid #aaa; border-radius: 5px; box-shadow: 0 1px 3px rgba(0, 0, 0, .6); display: flex; align-items: center; justify-content: center; gap: 3px; color: #222; }
.ime svg { width: 12px; height: 12px; }
.watermark { position: absolute; right: 11px; bottom: 7px; display: flex; gap: 1px; opacity: .8; align-items: center; }
.watermark svg { width: 42px; height: 42px; }
.watermark div { display: flex; flex-direction: column; }
.watermark b { font-size: 21px; line-height: 24px; color: #3f87cc; }
.watermark span { font: 700 16px/20px "Liberation Sans", sans-serif; color: #58be78; }
```
FILE: app.js
```js
const NS = "http://www.w3.org/2000/svg";
const PX_PER_MM = 2.1733;

function add(parent, name, attrs, text) {
  const el = document.createElementNS(NS, name);
  for (const key in attrs) el.setAttribute(key, attrs[key]);
  if (text !== undefined) el.textContent = text;
  parent.appendChild(el);
}

// Ticks every 5 mm, taller at 25 mm, labelled at 50 mm.
function drawRuler(svg, zero, vertical) {
  const length = vertical ? svg.clientHeight : svg.clientWidth;
  const first = Math.ceil(-zero / PX_PER_MM / 5);
  const last = Math.floor((length - zero) / PX_PER_MM / 5);
  for (let i = first; i <= last; i++) {
    const pos = Math.floor(zero + i * 5 * PX_PER_MM);
    const size = i % 10 === 0 ? 5 : i % 5 === 0 ? 2 : 1;
    const edge = 16 - size;
    add(svg, "rect", vertical
      ? { x: edge, y: pos, width: size, height: 1, fill: "#808080" }
      : { x: pos, y: edge, width: 1, height: size, fill: "#808080" });
    if (i % 10 === 0 && pos < length - 30) {
      const label = Math.abs(i * 5);
      add(svg, "text", vertical
        ? { transform: `translate(11 ${pos}) rotate(-90)` }
        : { x: pos, y: 10 }, label);
    }
  }
}

drawRuler(document.getElementById("hruler"), 727.5, false);
drawRuler(document.getElementById("vruler"), 320.5, true);

document.querySelectorAll(".swatches").forEach((box) => {
  box.dataset.colors.split(" ").forEach((color) => {
    const button = document.createElement("button");
    button.setAttribute("aria-label", color);
    if (color === "none") {
      button.style.background = "#fff";
      button.innerHTML = '<svg viewBox="0 0 16 16"><path d="M2 14 14 2"/></svg>';
    } else {
      button.style.background = "#" + color;
    }
    box.appendChild(button);
  });
});
```
